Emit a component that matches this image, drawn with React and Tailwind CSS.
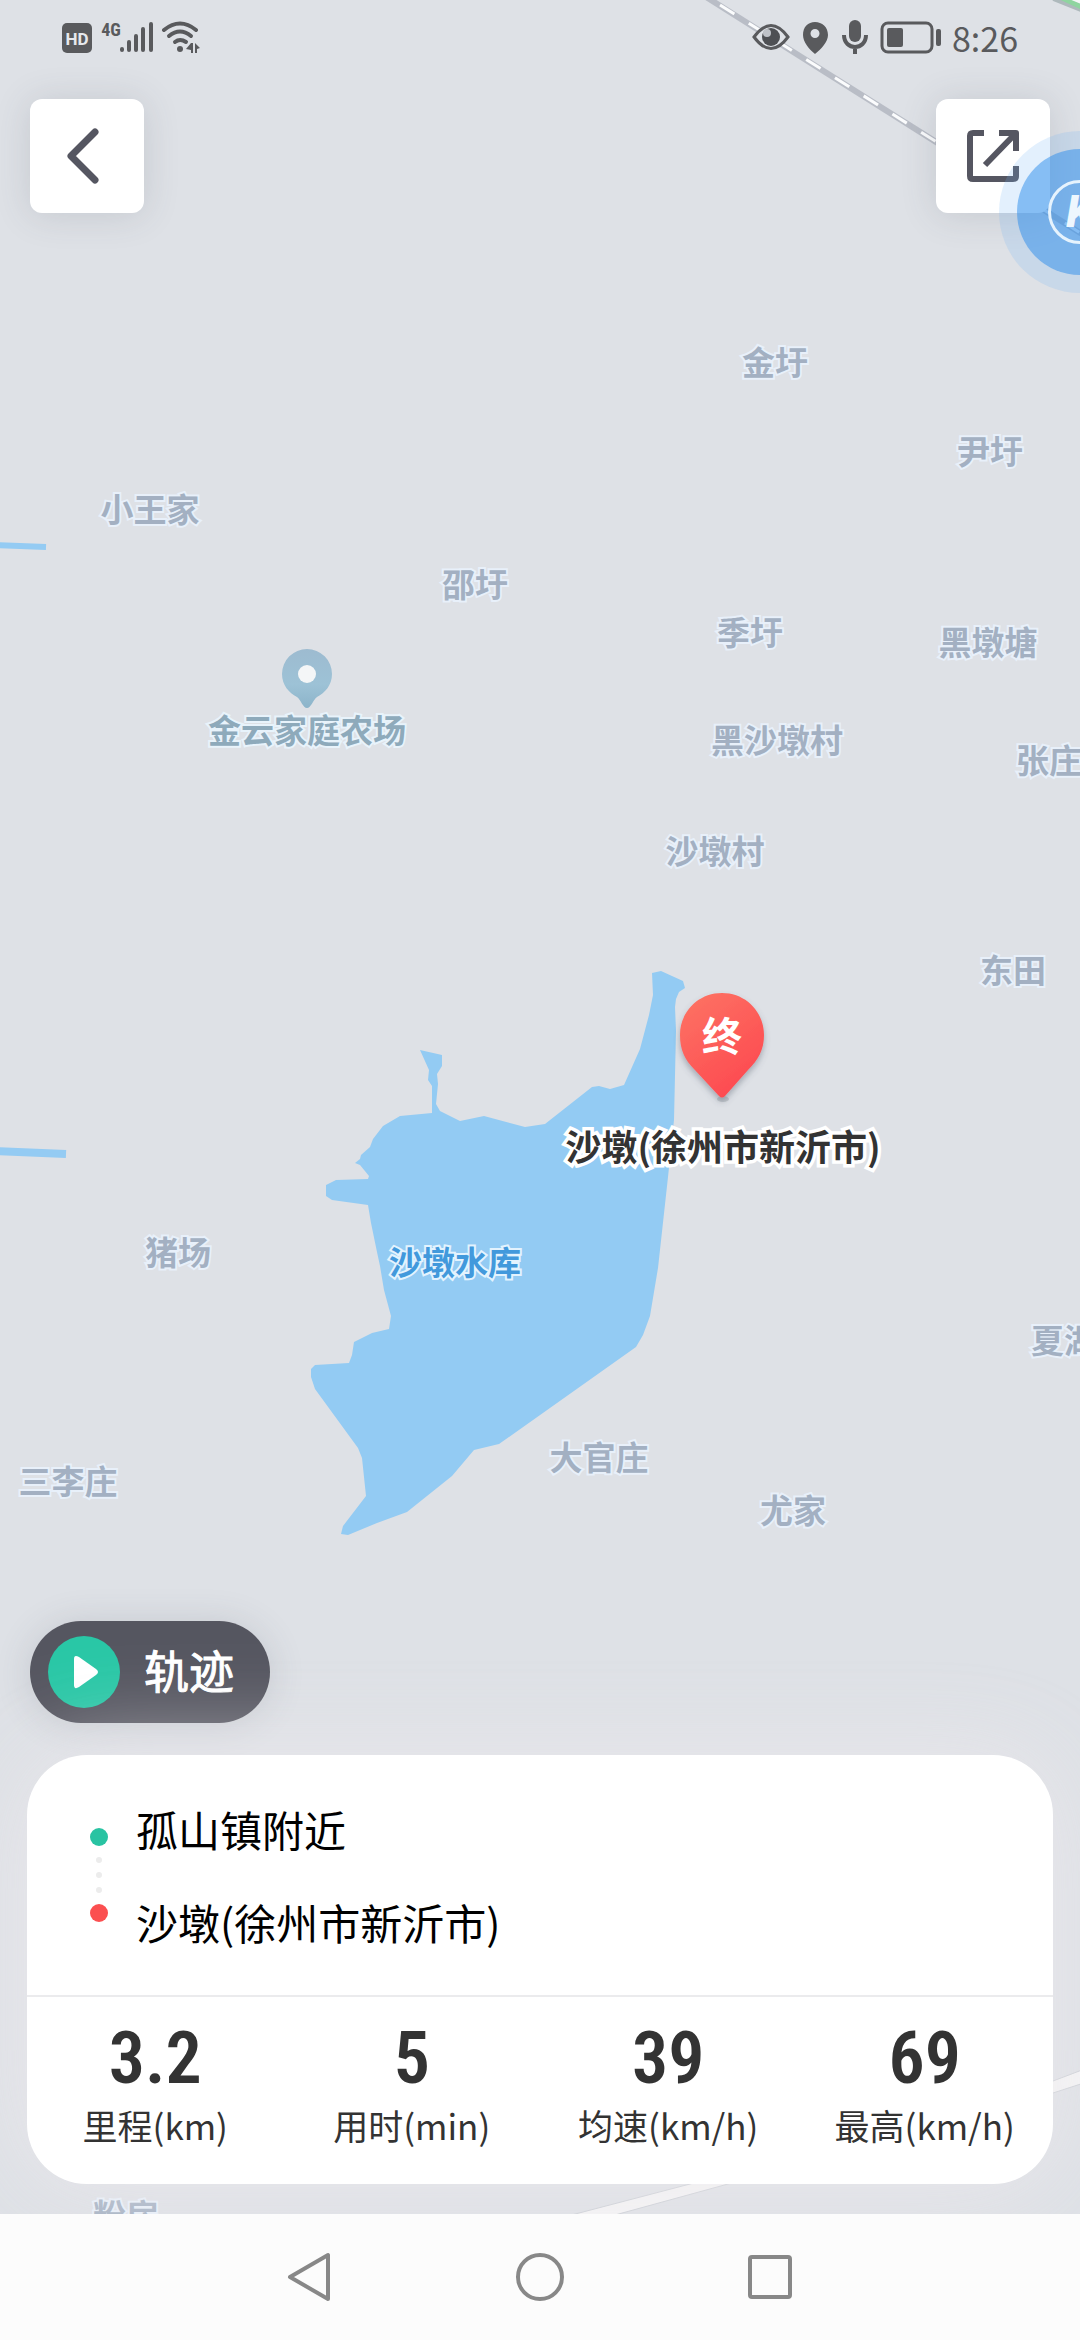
const PLACES = [
  { name: "金圩", x: 775, y: 363 },
  { name: "尹圩", x: 990, y: 452 },
  { name: "小王家", x: 150, y: 510 },
  { name: "邵圩", x: 475, y: 585 },
  { name: "季圩", x: 750, y: 633 },
  { name: "黑墩塘", x: 988, y: 643 },
  { name: "黑沙墩村", x: 777, y: 741 },
  { name: "张庄", x: 1049, y: 761 },
  { name: "沙墩村", x: 715, y: 852 },
  { name: "东田", x: 1013, y: 971 },
  { name: "猪场", x: 178, y: 1253 },
  { name: "夏湖", x: 1064, y: 1341 },
  { name: "大官庄", x: 599, y: 1458 },
  { name: "三李庄", x: 68, y: 1482 },
  { name: "尤家", x: 793, y: 1511 },
  { name: "粉房", x: 126, y: 2216 },
];

const STATS = [
  { value: "3.2", label: "里程(km)" },
  { value: "5", label: "用时(min)" },
  { value: "39", label: "均速(km/h)" },
  { value: "69", label: "最高(km/h)" },
];

function MapLabel({ x, y, className, children }) {
  return (
    <span
      className={`absolute -translate-x-1/2 -translate-y-1/2 whitespace-nowrap pb-[3px] font-bold leading-none [paint-order:stroke_fill] ${className}`}
      style={{ left: x, top: y }}
    >
      {children}
    </span>
  );
}

function MapCanvas() {
  return (
    <div className="absolute inset-0 overflow-hidden" role="img" aria-label="地图">
      <svg className="absolute left-0 top-0" width="1080" height="2214" viewBox="0 0 1080 2214">
        <defs>
          <linearGradient id="poi" x1="0" y1="0" x2="0" y2="1">
            <stop offset="0" stopColor="#9dbbd0" />
            <stop offset="0.6" stopColor="#9dc2d6" />
            <stop offset="1" stopColor="#8cb4ca" />
          </linearGradient>
          <linearGradient id="end" x1="0" y1="0" x2="0.6" y2="1">
            <stop offset="0" stopColor="#fd7565" />
            <stop offset="1" stopColor="#fd4a50" />
          </linearGradient>
          <filter id="drop" x="-30%" y="-30%" width="160%" height="160%">
            <feDropShadow dx="0" dy="4" stdDeviation="3" floodColor="#4b5563" floodOpacity="0.4" />
          </filter>
        </defs>

        {/* railway */}
        <path d="M703 -5L1090 239" stroke="#b9bdc6" strokeWidth="6" />
        <path d="M720 5L1090 239" stroke="#fbfcfd" strokeWidth="3" strokeDasharray="17 17" />

        {/* highway corner */}
        <path d="M1054 -3L1084 9" stroke="#aeb9bc" strokeWidth="8" />
        <path d="M1058 -4L1084 8" stroke="#8fd5a0" strokeWidth="5" />
        <path d="M1067 -4L1084 3" stroke="#f4f7f7" strokeWidth="4" />

        {/* minor road */}
        <path
          d="M560 2218L690 2184L1053 2081L1090 2067V2081L1053 2093L728 2184L604 2218Z"
          fill="#f4f4f5"
          stroke="#cbcfd5"
          strokeWidth="1"
        />

        {/* canals */}
        <path d="M-4 545L46 547" stroke="#94cbf3" strokeWidth="6" />
        <path d="M-4 1151L66 1154" stroke="#94cbf3" strokeWidth="8" />

        {/* reservoir */}
        <path
          fill="#93cbf3"
          d="M420 1050L442 1055L442 1066L437 1074L438 1084L436 1104L440 1111L460 1121L484 1116L525 1127L545 1124L592 1087L599 1086L610 1089L624 1085L640 1049L649 1015L653 995L652 973L661 971L683 981L685 988L679 992L676 999L675 1007L676 1031L674 1120L668 1177L658 1268L650 1316L643 1335L636 1347L499 1444L474 1450L452 1476L407 1512L377 1523L348 1535L341 1534L343 1526L366 1496L362 1458L358 1448L315 1389L311 1377L311 1369L315 1365L349 1363L352 1355L354 1342L372 1333L389 1329L391 1316L384 1290L380 1266L377 1252L371 1223L368 1205L332 1200L326 1196L326 1185L336 1180L368 1179L369 1176L360 1165L355 1163L360 1159L361 1155L370 1147L373 1139L383 1126L400 1116L432 1113L432 1086L428 1080L429 1070Z"
        />

        {/* farm pin */}
        <path
          d="M307 649A25 25 0 0 1 332 674C332 685 325 693 317 697C313 700 311 708 307 708C303 708 301 700 297 697C289 693 282 685 282 674A25 25 0 0 1 307 649Z"
          fill="url(#poi)"
        />
        <circle cx="307" cy="674" r="9" fill="#f4f6f7" />

        {/* destination pin */}
        <ellipse cx="723" cy="1099" rx="6" ry="3" fill="#8e949b" opacity="0.35" />
        <path
          d="M722 993C746 993 764 1012 764 1035C764 1050 758 1060 748 1070L725 1096Q722 1099 719 1096L694 1069C685 1060 680 1050 680 1035C680 1012 698 993 722 993Z"
          fill="url(#end)"
          filter="url(#drop)"
        />
      </svg>

      {PLACES.map((p) => (
        <MapLabel
          key={p.name}
          x={p.x}
          y={p.y}
          className="text-[33px] text-[#a3b0c2] [-webkit-text-stroke:4px_#e8f0fa]"
        >
          {p.name}
        </MapLabel>
      ))}
      <MapLabel x={307} y={731} className="text-[33px] text-[#8eaabb] [-webkit-text-stroke:4px_#e8f3fb]">
        金云家庭农场
      </MapLabel>
      <MapLabel x={455} y={1263} className="text-[33px] text-[#4299dc] [-webkit-text-stroke:4px_#e3f3fe]">
        沙墩水库
      </MapLabel>
      <MapLabel x={723} y={1146} className="text-[36px] text-[#333333] [-webkit-text-stroke:7px_#ffffff]">
        沙墩(徐州市新沂市)
      </MapLabel>
      <MapLabel x={722} y={1035} className="text-[40px] text-white">
        终
      </MapLabel>
    </div>
  );
}

function StatusBar() {
  return (
    <header className="relative flex h-[75px] items-center justify-between px-[62px] text-[#595a5d]">
      <svg width="140" height="36" viewBox="62 20 140 36" aria-label="信号">
        <rect x="62" y="23" width="30" height="30" rx="5" fill="#595a5d" />
        <text x="77" y="45" textAnchor="middle" fontFamily="Roboto, sans-serif" fontWeight="700" fontSize="17" fill="#e6e8ec">
          HD
        </text>
        <text x="111" y="36" textAnchor="middle" fontFamily="'Roboto Condensed', Roboto, sans-serif" fontWeight="700" fontSize="18" fill="#595a5d">
          4G
        </text>
        <g stroke="#595a5d" strokeWidth="4" strokeLinecap="round">
          <path d="M122 49V50M129 42V50M136 36V50M143 29V50M151 24V50" />
        </g>
        <g fill="none" stroke="#595a5d" strokeWidth="4" strokeLinecap="round">
          <path d="M164 30Q180 17 196 30" />
          <path d="M169 36Q180 27 191 36" />
          <path d="M175 42Q180 38 186 42" />
        </g>
        <circle cx="180" cy="49" r="3" fill="#595a5d" />
        <path d="M193 43V53H191V50L186 49L191 43ZM195 43L200 48L197 49V53H195Z" fill="#595a5d" />
      </svg>
      <div className="flex items-center gap-2.5">
        <svg width="190" height="36" viewBox="752 20 190 36" aria-label="状态">
          <path d="M754 37Q771 14 788 37Q771 60 754 37Z" fill="#dfe2e7" stroke="#595a5d" strokeWidth="3" />
          <circle cx="771" cy="37" r="9" fill="#4e5054" />
          <circle cx="767" cy="33" r="4" fill="#bfc2c8" />
          <path
            fillRule="evenodd"
            fill="#595a5d"
            d="M815 22C822 22 828 27 828 35C828 42 821 49 815 54C809 49 803 42 803 35C803 27 808 22 815 22ZM815 29A4 4 0 1 0 815 38A4 4 0 1 0 815 29Z"
          />
          <rect x="849" y="20" width="12" height="22" rx="6" fill="#595a5d" />
          <path d="M844 35C844 51 866 51 866 35M855 47V54" fill="none" stroke="#595a5d" strokeWidth="4" />
          <rect x="882" y="23" width="50" height="29" rx="6" fill="none" stroke="#595a5d" strokeWidth="3" />
          <rect x="887" y="28" width="16" height="19" rx="2" fill="#595a5d" />
          <rect x="936" y="29" width="5" height="17" rx="2" fill="#595a5d" />
        </svg>
        <time className="text-[34px] leading-none">8:26</time>
      </div>
    </header>
  );
}

function SquareButton({ label, children }) {
  return (
    <button
      type="button"
      aria-label={label}
      className="flex size-[114px] items-center justify-center rounded-xl bg-white shadow-[0_2px_36px_rgba(70,75,85,0.16)]"
    >
      {children}
    </button>
  );
}

export default function App() {
  return (
    <div
      lang="zh-CN"
      className="relative flex min-h-screen flex-col bg-[#dee1e6] font-['Noto_Sans_CJK_SC',sans-serif]"
    >
      <main className="relative flex flex-1 flex-col overflow-hidden">
        <MapCanvas />
        <StatusBar />

        <div className="relative mt-6 flex justify-between px-[30px]">
          <SquareButton label="返回">
            <svg className="mr-2" width="34" height="58" viewBox="0 0 34 58" fill="none" stroke="#555661" strokeWidth="7" strokeLinecap="round" strokeLinejoin="round">
              <path d="M29 5L5 29L29 53" />
            </svg>
          </SquareButton>
          <SquareButton label="分享">
            <svg width="56" height="56" viewBox="0 0 56 56" fill="none" stroke="#555661" strokeWidth="6">
              <path d="M19 5H8Q5 5 5 8V48Q5 51 8 51H48Q51 51 51 48V38" strokeLinejoin="round" />
              <path d="M34 5H51V23M51 5L20 37" strokeLinejoin="round" />
            </svg>
          </SquareButton>
        </div>

        {/* floating assistant bubble, half off the screen edge */}
        <button
          type="button"
          aria-label="悬浮球"
          className="absolute -right-[81px] top-[131px] flex size-[162px] items-center justify-center rounded-full bg-[#74b6f6]/20"
        >
          <span className="flex size-[126px] items-center justify-center rounded-full bg-[#2a8ceb]/50">
            <span className="flex size-16 items-center justify-center rounded-full border-[3px] border-[#e6f3fd] font-[Roboto,sans-serif] text-[44px] font-black italic leading-none text-[#eef7fe]">
              K
            </span>
          </span>
        </button>

        <div className="flex-1" />

        <div className="relative mb-8 px-[30px]">
          <button
            type="button"
            className="flex h-[102px] w-60 items-center gap-6 rounded-full bg-[#555660] pl-[18px] text-[45px] leading-none text-white shadow-[0_2px_36px_rgba(70,75,85,0.16)]"
          >
            <span className="flex size-[72px] items-center justify-center rounded-full bg-[#29c7a6]">
              <svg className="ml-1" width="26" height="34" viewBox="0 0 26 34" fill="#ffffff">
                <path d="M1 4Q1 -1 6 2L23 14Q27 17 23 20L6 32Q1 35 1 30Z" />
              </svg>
            </span>
            <span className="pb-1.5 [-webkit-text-stroke:1px_#ffffff]">轨迹</span>
          </button>
        </div>

        <section className="relative mx-[27px] mb-[30px] rounded-[60px] bg-white shadow-[0_0_100px_rgba(238,234,238,0.75)]">
          <div className="flex h-[242px] items-center gap-7 border-b-2 border-[#ebebed] pl-[63px]">
            <div className="flex flex-col items-center gap-[9px]" aria-hidden="true">
              <span className="size-[18px] rounded-full bg-[#29c3a2]" />
              <span className="mt-0.5 size-1.5 rounded-full bg-[#ececec]" />
              <span className="size-1.5 rounded-full bg-[#ececec]" />
              <span className="mb-0.5 size-1.5 rounded-full bg-[#ececec]" />
              <span className="size-[18px] rounded-full bg-[#fb4f50]" />
            </div>
            <div className="flex flex-col gap-[33px] text-[42px] leading-[60px] text-black">
              <p>孤山镇附近</p>
              <p>沙墩(徐州市新沂市)</p>
            </div>
          </div>
          <dl className="grid h-[187px] grid-cols-4 pt-6 text-center text-[#333333]">
            {STATS.map((s) => (
              <div key={s.label} className="flex flex-col-reverse justify-end">
                <dt className="text-[35px] leading-[56px]">{s.label}</dt>
                <dd className="font-['Roboto_Condensed',Roboto,sans-serif] text-[72px] font-semibold leading-[76px]">
                  {s.value}
                </dd>
              </div>
            ))}
          </dl>
        </section>
      </main>

      <nav className="flex h-[126px] items-center justify-center bg-[#fcfcfc]">
        <button type="button" aria-label="返回" className="flex w-[230px] justify-center">
          <svg width="48" height="52" viewBox="0 0 48 52" fill="none" stroke="#888888" strokeWidth="4" strokeLinejoin="round">
            <path d="M42 4V48L4 26Z" />
          </svg>
        </button>
        <button type="button" aria-label="主页" className="flex w-[230px] justify-center">
          <svg width="52" height="52" viewBox="0 0 52 52" fill="none" stroke="#888888" strokeWidth="4">
            <circle cx="26" cy="26" r="22" />
          </svg>
        </button>
        <button type="button" aria-label="最近任务" className="flex w-[230px] justify-center">
          <svg width="52" height="52" viewBox="0 0 52 52" fill="none" stroke="#888888" strokeWidth="4">
            <rect x="6" y="6" width="40" height="40" rx="2" />
          </svg>
        </button>
      </nav>
    </div>
  );
}
